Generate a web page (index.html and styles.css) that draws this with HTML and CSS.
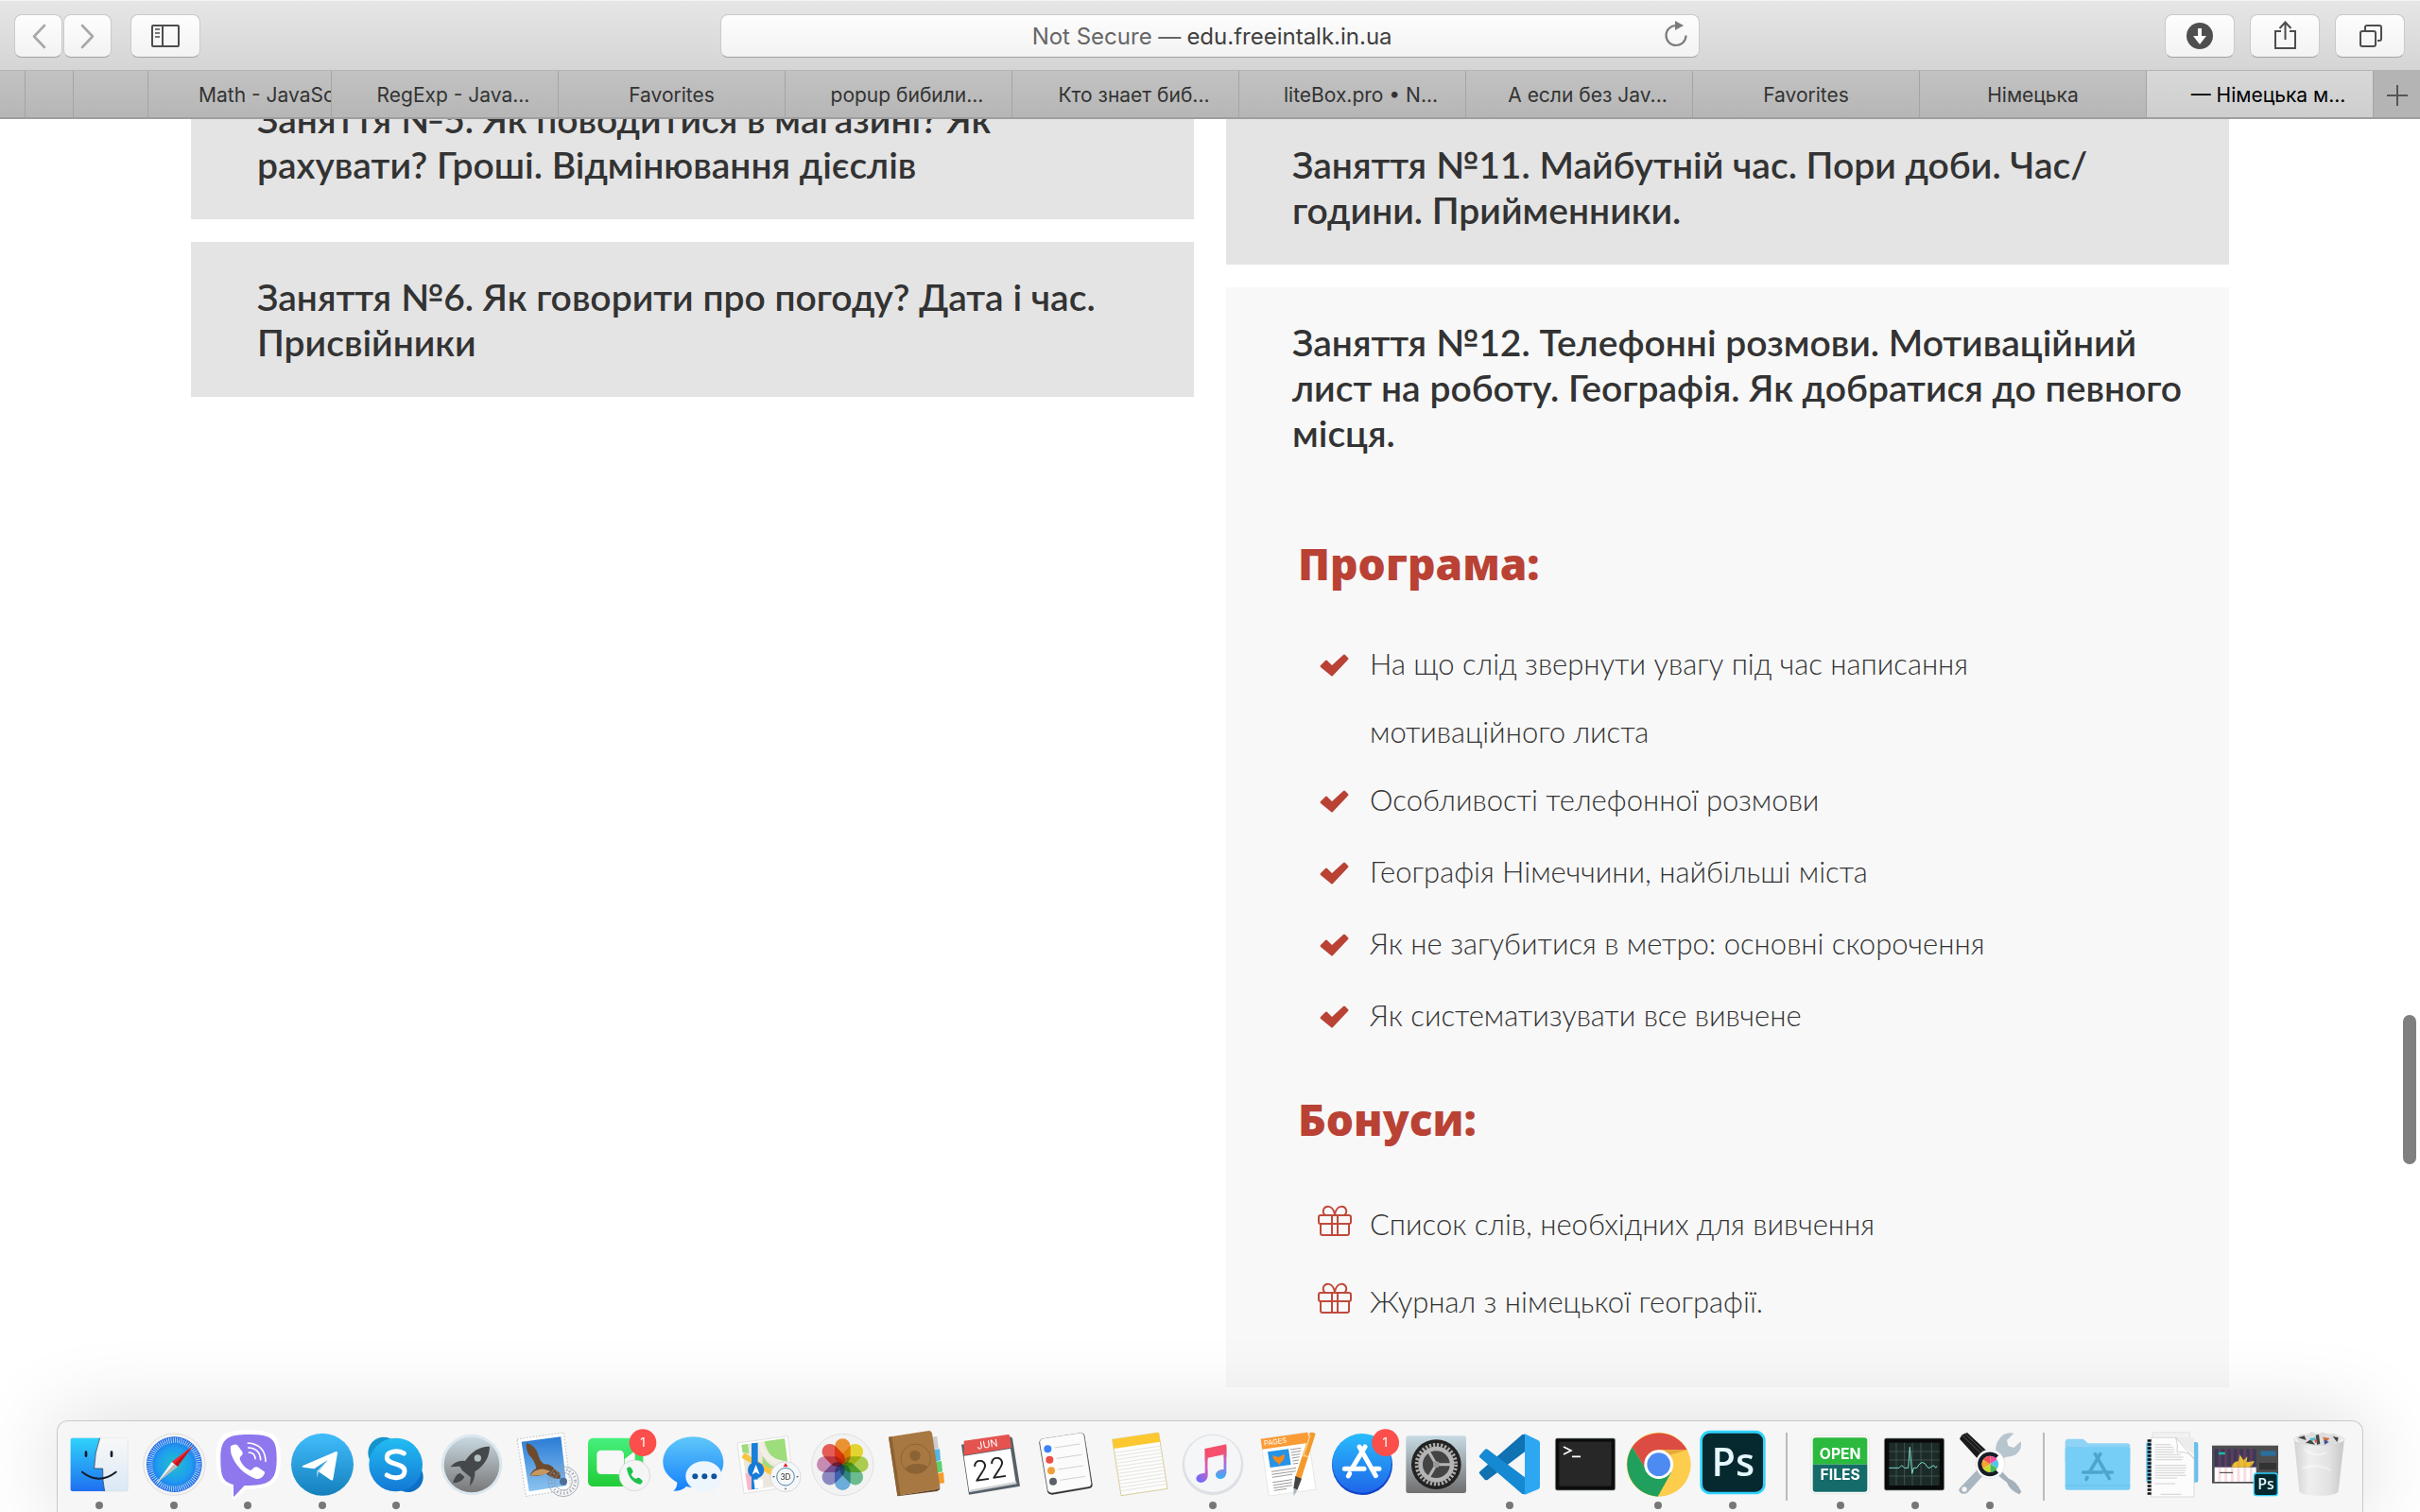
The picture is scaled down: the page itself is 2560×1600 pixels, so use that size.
FILE: index.html
```html
<!DOCTYPE html>
<html lang="uk">
<head>
<meta charset="utf-8">
<title>— Німецька мова</title>
<link rel="stylesheet" href="styles.css">
</head>
<body>
<header class="browser">
  <div class="toolbar">
    <div class="tools tools-left">
      <div class="nav">
        <button class="tool tool-narrow" aria-label="Back"><svg width="50" height="44" viewBox="0 0 50 44"><path d="M31 11 20 22.500 31 34" fill="none" stroke="#a8a8a8" stroke-width="2.600" stroke-linecap="round" stroke-linejoin="round"/></svg></button>
        <button class="tool tool-narrow" aria-label="Forward"><svg width="50" height="44" viewBox="0 0 50 44"><path d="M19 11 30 22.500 19 34" fill="none" stroke="#a8a8a8" stroke-width="2.600" stroke-linecap="round" stroke-linejoin="round"/></svg></button>
      </div>
      <button class="tool" aria-label="Sidebar"><svg width="72" height="44" viewBox="0 0 72 44"><g fill="none" stroke="#4d4d4d" stroke-width="2"><rect x="22" y="11" width="28" height="22" rx="1"/><path d="M33 11v22"/></g><path d="M25 15h5M25 19h5M25 23h5" stroke="#777" stroke-width="2"/></svg></button>
    </div>
    <div class="address">
      <label for="url">Not Secure —</label>
      <input id="url" type="text" value="edu.freeintalk.in.ua">
      <button class="reload" aria-label="Reload"><svg width="28" height="32" viewBox="0 0 28 32"><path d="M14 6a10.500 10.500 0 1 0 10.500 10.500" fill="none" stroke="#7b7b7b" stroke-width="2.200"/><path d="M13 1v10l9-5z" fill="#7b7b7b"/></svg></button>
    </div>
    <div class="tools tools-right">
      <button class="tool" aria-label="Downloads"><svg width="72" height="44" viewBox="0 0 72 44"><circle cx="36" cy="22" r="14" fill="#4f4f4f"/><path d="M34 14h4v8h5l-7 9-7-9h5z" fill="#fff"/></svg></button>
      <button class="tool" aria-label="Share"><svg width="72" height="44" viewBox="0 0 72 44"><path d="M32 17h-6v18h21V17h-6M36.500 26V8M30.500 14l6-6.500 6 6.500" fill="none" stroke="#4d4d4d" stroke-width="2"/></svg></button>
      <button class="tool" aria-label="Show all tabs"><svg width="72" height="44" viewBox="0 0 72 44"><g fill="none" stroke="#4d4d4d" stroke-width="2"><rect x="26" y="17" width="16" height="16" rx="2"/><path d="M31 16v-3q0-2 2-2h13q2 0 2 2v12q0 2-2 2h-2"/></g></svg></button>
    </div>
  </div>
  <nav class="tabs">
    <button class="tab stack-a" aria-label="Tab"></button>
    <button class="tab stack-b" aria-label="Tab"></button>
    <button class="tab stack-c" aria-label="Tab"></button>
    <button class="tab stack-d">Math - JavaScript</button>
    <button class="tab full long">RegExp - Java...</button>
    <button class="tab full">Favorites</button>
    <button class="tab full long">popup бибили...</button>
    <button class="tab full long">Кто знает биб...</button>
    <button class="tab full long">liteBox.pro • N...</button>
    <button class="tab full long">А если без Jav...</button>
    <button class="tab full">Favorites</button>
    <button class="tab full">Німецька</button>
    <button class="tab full long active">— Німецька м...</button>
    <button class="tab add" aria-label="New tab"><svg width="24" height="24" viewBox="0 0 24 24"><path d="M12 1v22M1 12h22" stroke="#555" stroke-width="2"/></svg></button>
  </nav>
</header>

<main class="lessons">
  <section class="column column-left">
    <article class="card"><h2>Заняття №5. Як поводитися в магазині? Як<br>рахувати? Гроші. Відмінювання дієслів</h2></article>
    <article class="card"><h2>Заняття №6. Як говорити про погоду? Дата і час.<br>Присвійники</h2></article>
  </section>
  <section class="column column-right">
    <article class="card"><h2>Заняття №11. Майбутній час. Пори доби. Час/<br>години. Прийменники.</h2></article>
    <article class="card open">
      <h2>Заняття №12. Телефонні розмови. Мотиваційний<br>лист на роботу. Географія. Як добратися до певного<br>місця.</h2>
      <div class="details">
        <h3>Програма:</h3>
        <ul class="program">
          <li><svg class="check" viewBox="0 0 30 24"><path d="M0 12l5-5q1-1 2 0l5 5L24 1q1-1 2 0l3 3q1 1 0 2L13 23q-1 1-2 0L0 14q-1-1 0-2z"/></svg><span>На що слід звернути увагу під час написання<br>мотиваційного листа</span></li>
          <li><svg class="check" viewBox="0 0 30 24"><path d="M0 12l5-5q1-1 2 0l5 5L24 1q1-1 2 0l3 3q1 1 0 2L13 23q-1 1-2 0L0 14q-1-1 0-2z"/></svg><span>Особливості телефонної розмови</span></li>
          <li><svg class="check" viewBox="0 0 30 24"><path d="M0 12l5-5q1-1 2 0l5 5L24 1q1-1 2 0l3 3q1 1 0 2L13 23q-1 1-2 0L0 14q-1-1 0-2z"/></svg><span>Географія Німеччини, найбільші міста</span></li>
          <li><svg class="check" viewBox="0 0 30 24"><path d="M0 12l5-5q1-1 2 0l5 5L24 1q1-1 2 0l3 3q1 1 0 2L13 23q-1 1-2 0L0 14q-1-1 0-2z"/></svg><span>Як не загубитися в метро: основні скорочення</span></li>
          <li><svg class="check" viewBox="0 0 30 24"><path d="M0 12l5-5q1-1 2 0l5 5L24 1q1-1 2 0l3 3q1 1 0 2L13 23q-1 1-2 0L0 14q-1-1 0-2z"/></svg><span>Як систематизувати все вивчене</span></li>
        </ul>
        <h3>Бонуси:</h3>
        <ul class="bonus">
          <li><svg class="gift" viewBox="0 0 36 32"><rect x="1" y="10" width="34" height="9" rx="2"/><path d="M3 19v10q0 2 2 2h26q2 0 2-2V19M15 10v21M21 10v21M18 9C16-1 8-1 6 4q-1 4 2 6M18 9c2-10 10-10 12-5q1 4-2 6"/></svg><span>Список слів, необхідних для вивчення</span></li>
          <li><svg class="gift" viewBox="0 0 36 32"><rect x="1" y="10" width="34" height="9" rx="2"/><path d="M3 19v10q0 2 2 2h26q2 0 2-2V19M15 10v21M21 10v21M18 9C16-1 8-1 6 4q-1 4 2 6M18 9c2-10 10-10 12-5q1 4-2 6"/></svg><span>Журнал з німецької географії.</span></li>
        </ul>
      </div>
    </article>
  </section>
  <div class="scroll-thumb"></div>
</main>

<footer class="dock">
  <button class="app running" aria-label="Finder"><svg viewBox="79 40 234 255"><defs><linearGradient id="fa" x2="0" y2="1"><stop stop-color="#2fd3fb"/><stop offset="1" stop-color="#1f6ff0"/></linearGradient><linearGradient id="fb" x2="0" y2="1"><stop stop-color="#f8f8f8"/><stop offset="1" stop-color="#dbe8f6"/></linearGradient></defs><rect x="105" y="93" width="182" height="169" rx="6" fill="url(#fb)" stroke="#c9d2dc"/><path d="M111 93h87q-17 46-18 97h27q-1 40 6 72H111q-6 0-6-6V99q0-6 6-6z" fill="url(#fa)"/><path d="M198 93q-17 46-18 97h27q-1 40 6 72" fill="none" stroke="#1c2a3c" stroke-width="2"/><path d="M154 138v12M235 138v12" stroke="#111c28" stroke-width="8" stroke-linecap="round"/><path d="M142 201q53 42 107 0" fill="none" stroke="#111c28" stroke-width="6" stroke-linecap="round"/></svg></button>
  <button class="app running" aria-label="Safari"><svg viewBox="317 40 234 255"><defs><radialGradient id="sa"><stop stop-color="#20c0c8"/><stop offset=".6" stop-color="#1f9df0"/><stop offset="1" stop-color="#1f66e6"/></radialGradient></defs><circle cx="435" cy="177" r="98" fill="#f4f4f4" stroke="#d0d0d0" stroke-width="2"/><circle cx="435" cy="177" r="88" fill="url(#sa)"/><circle cx="435" cy="177" r="77" fill="none" stroke="#e8f4ff" stroke-width="17" stroke-dasharray="2 4.720"/><path d="M495 117l-50 67-18-15z" fill="#f0282d"/><path d="M495 117l-50 67-10-8z" fill="#c0161c"/><path d="M379 236l48-67 18 15z" fill="#f4f4f4"/><path d="M379 236l56-60 10 8z" fill="#b8b8b8"/></svg></button>
  <button class="app running" aria-label="Viber"><svg viewBox="549 40 234 255"><path d="M669 68c80 0 102 16 102 90s-20 96-108 98l-39 30q-8 2-8-8v-29c-34-8-50-24-50-91 0-76 26-90 103-90z" fill="#fff"/><path d="M669 82c76 0 89 14 89 76s-14 86-89 86h-13l-32 34q-3 3-3-2v-35c-32-8-41-22-41-83 0-64 22-76 89-76z" fill="#8f77ee"/><path d="M612 119q12-9 21-4l16 22q4 8-5 14-6 7 0 16 9 20 30 29 5 0 11-8 8-6 15-1l19 13q4 6-6 16-10 10-22 6-57-22-77-77-4-16-2-26z" fill="#fff"/><path d="M670 139q19 1 20 20M668 124q37 2 39 38M667 109q54 4 56 58" fill="none" stroke="#fff" stroke-width="5" stroke-linecap="round"/></svg></button>
  <button class="app running" aria-label="Telegram"><svg viewBox="786 40 234 255"><defs><linearGradient id="tg" x2="0" y2="1"><stop stop-color="#41bdfc"/><stop offset="1" stop-color="#1580bd"/></linearGradient></defs><circle cx="903" cy="177" r="99" fill="url(#tg)"/><path d="M841 181l105-45q6-1 5 5l-14 83q-2 6-8 2l-38-26 29-37-43 28-35-5q-6-2-1-5z" fill="#fff"/><path d="M891 200l29-37-34 35v22z" fill="#c5e1f2"/></svg></button>
  <button class="app running" aria-label="Skype"><svg viewBox="1021 40 234 255"><defs><linearGradient id="sk" x2="0" y2="1"><stop stop-color="#22bdf2"/><stop offset="1" stop-color="#1378d4"/></linearGradient></defs><circle cx="1099" cy="140" r="50" fill="#1593cd"/><circle cx="1176" cy="217" r="48" fill="#0d70c6"/><circle cx="1137" cy="178" r="85" fill="url(#sk)"/><path d="M1163 142c-20-11-55-8-54 13 1 26 56 15 56 43 0 26-38 25-56 13" fill="none" stroke="#fff" stroke-width="15" stroke-linecap="round"/></svg></button>
  <button class="app" aria-label="Launchpad"><svg viewBox="1257 40 234 255"><defs><linearGradient id="lp" x2="0" y2="1"><stop stop-color="#c9d8e0"/><stop offset="1" stop-color="#777"/></linearGradient></defs><circle cx="1377" cy="178" r="97" fill="#dbe7ee"/><circle cx="1377" cy="178" r="88" fill="url(#lp)"/><path d="M1434 120c-30-1-56 14-78 46q-28-4-47 19l30-2 8 13 17 14 10 8-3 28q18-20 16-46c36-24 46-50 47-80z" fill="#45484b"/><path d="M1340 204l14 12q-6 18-36 20 4-26 22-32z" fill="#45484b"/><circle cx="1396" cy="157" r="11" fill="#b4bfc4"/></svg></button>
  <button class="app" aria-label="Mail"><svg viewBox="-8 40 234 255"><defs><linearGradient id="ml" x2="0" y2="1"><stop stop-color="#2a7bd6"/><stop offset="1" stop-color="#8cc4f0"/></linearGradient></defs><path d="M22 97l148-21 22 180-142 22z" fill="#fff" stroke="#ccc" stroke-width="4" stroke-dasharray="5 5"/><path d="M36 105l125-16 18 155-119 19z" fill="url(#ml)"/><path d="M52 108q26 8 35 32 6 26 20 36 22-1 34 16 22 8 18 30-30 2-46-18-20 14-50 8 8-18 20-22-4-24-24-44-10-20-7-38z" fill="#6d4a2c"/><path d="M64 212q14-22 44-20l20 6q-24 18-64 14z" fill="#c59862"/><g fill="none" stroke="#8d97a5" stroke-width="3" opacity=".75"><circle cx="169" cy="231" r="48"/><circle cx="169" cy="231" r="28"/><circle cx="169" cy="231" r="38" stroke-width="9" stroke-dasharray="4 7"/></g><circle cx="169" cy="231" r="12" fill="#4c6f99"/></svg></button>
  <button class="app" aria-label="FaceTime, 1 notification"><svg viewBox="228 40 234 255"><defs><linearGradient id="ft" x2="0" y2="1"><stop stop-color="#45f07d"/><stop offset="1" stop-color="#22cb36"/></linearGradient></defs><rect x="246" y="93" width="175" height="154" rx="16" fill="url(#ft)"/><rect x="274" y="132" width="86" height="76" rx="14" fill="#f7f7f7"/><path d="M362 160l28-22q5-2 5 4v46h-33z" fill="#f7f7f7"/><circle cx="394" cy="212" r="49" fill="#f4f5f4" stroke="#ccc" stroke-width="2"/><path d="M369 189q9-9 15 0l5 9q0 5-6 10 3 10 15 15 7-6 12-3l9 9q1 7-8 11-35-8-42-51z" fill="#1fc14b"/><circle cx="420" cy="108" r="43" fill="#fc4e4b"/><text class="badge" x="420" y="122">1</text></svg></button>
  <button class="app" aria-label="Messages"><svg viewBox="464 40 234 255"><defs><linearGradient id="ms" x2="0" y2="1"><stop stop-color="#60c8fa"/><stop offset="1" stop-color="#1480fb"/></linearGradient></defs><path d="M579 89c54 0 96 36 96 81s-40 80-96 80q-10 0-22-3-14 15-41 14 12-10 12-27c-28-16-45-37-45-64 0-45 42-81 96-81z" fill="url(#ms)"/><path d="M613 167c33 0 57 21 57 48 0 16-8 28-22 36l2 18q-13-2-19-10-8 2-18 2c-33 0-58-20-58-46s25-48 58-48z" fill="#eef6fd"/><g fill="#12539c"><circle cx="585" cy="215" r="9"/><circle cx="615" cy="215" r="9"/><circle cx="645" cy="215" r="9"/></g></svg></button>
  <button class="app" aria-label="Maps"><svg viewBox="699 40 234 255"><path d="M720 109l160-22 19 160-158 22z" fill="#fff" stroke="#d5d5d5" stroke-width="2"/><path d="M733 115l137-20 17 145-134 19z" fill="#ece7dc"/><path d="M806 104l64-9 10 78q-58-2-74-69z" fill="#9ddd7c"/><path d="M733 115l20-3 4 30-20-3zM800 150q24 40 60 40l-60-1z" fill="#9ddd7c"/><path d="M790 106q18 66 90 70" fill="none" stroke="#f2eee4" stroke-width="18"/><path d="M745 205l24 3 4 48-20 3z" fill="#f8b8c8"/><path d="M738 148l100 60" stroke="#f9c440" stroke-width="18"/><path d="M765 110v146h20V108z" fill="#187fdb"/><path d="M772 225l28-1 2 26-26 6z" fill="#fff"/><circle cx="779" cy="195" r="26" fill="#167bd8"/><path d="M779 178l12 31-12-7-12 7z" fill="#fff"/><circle cx="873" cy="216" r="48" fill="#f5f7f9" stroke="#c8ccd0" stroke-width="2"/><circle cx="873" cy="216" r="28" fill="none" stroke="#4f86a6" stroke-width="3"/><path d="M873 172l7 12h-14z" fill="#e51c23"/><path d="M833 216h5M908 216h5M873 252v5" stroke="#444" stroke-width="4"/><text class="map-label" x="873" y="225">3D</text></svg></button>
  <button class="app" aria-label="Photos"><svg viewBox="935 40 234 255"><circle cx="1053" cy="178" r="98" fill="#f2f2f2" stroke="#d2d5d8" stroke-width="2"/><g class="petals"><rect x="1028" y="95" width="50" height="82" rx="25" fill="#f89a35"/><rect x="1028" y="95" width="50" height="82" rx="25" fill="#f0e031" transform="rotate(45 1053 177)"/><rect x="1028" y="95" width="50" height="82" rx="25" fill="#b4d655" transform="rotate(90 1053 177)"/><rect x="1028" y="95" width="50" height="82" rx="25" fill="#72c596" transform="rotate(135 1053 177)"/><rect x="1028" y="95" width="50" height="82" rx="25" fill="#72b5e5" transform="rotate(180 1053 177)"/><rect x="1028" y="95" width="50" height="82" rx="25" fill="#9490cc" transform="rotate(225 1053 177)"/><rect x="1028" y="95" width="50" height="82" rx="25" fill="#d192bd" transform="rotate(270 1053 177)"/><rect x="1028" y="95" width="50" height="82" rx="25" fill="#f0625a" transform="rotate(315 1053 177)"/></g></svg></button>
  <button class="app" aria-label="Contacts"><svg viewBox="1170 40 234 255"><path d="M1336 90l18-2 4 38-18 4z" fill="#ccc"/><path d="M1344 130l18-2 3 36-18 4z" fill="#53b9e2"/><path d="M1350 168l18-2 3 34-18 4z" fill="#5fd06c"/><path d="M1356 206l18-4 3 34-18 2z" fill="#f59b2b"/><path d="M1200 90l128-20q8 0 10 8l25 168q-2 8-10 10l-125 20z" fill="#a87843"/><path d="M1200 90l10-1 28 186-10 2z" fill="#8d6232"/><path d="M1228 276l125-20q8-2 10-8v5q-2 8-10 9l-124 16z" fill="#5e4223"/><circle cx="1286" cy="159" r="47" fill="none" stroke="#8c6334" stroke-width="3"/><circle cx="1284" cy="149" r="17" fill="#8c6334"/><path d="M1252 192q10-16 36-17 26 0 36 10-14 20-38 21-20 0-34-14z" fill="#8c6334"/></svg></button>
  <button class="app" aria-label="Calendar"><svg viewBox="-94 40 234 255"><path d="M-70 114l152-24q8-2 10 4l24 152-162 27z" fill="#566069"/><path d="M-62 150l148-23 17 108-148 29z" fill="#fff"/><path d="M-62 102l140-20q4 0 5 4l6 38-151 24z" fill="#e5534f"/><path d="M-44 258l148-27 2 8-148 26z" fill="#cfd2d4"/><text class="cal-month" x="14" y="124" transform="rotate(-9 14 124)">JUN</text><text class="cal-day" x="24" y="224" transform="rotate(-9 24 224)">22</text></svg></button>
  <button class="app" aria-label="Reminders"><svg viewBox="142 40 234 255"><path d="M192 95l119-18q10 0 12 8l25 156q0 10-10 12l-118 20q-12 0-15-10l-26-154q0-12 13-14z" fill="#333"/><path d="M192 95l119-18q8 0 10 8l23 152q0 9-10 11l-115 19q-11 0-13-10l-25-150q0-10 11-12z" fill="#fbfbfb" stroke="#bbb"/><circle cx="206" cy="128" r="12" fill="#3a82f7"/><circle cx="212" cy="162" r="12" fill="#ea4e43"/><circle cx="217" cy="197" r="12" fill="#f29f3a"/><circle cx="223" cy="231" r="12" fill="#5b6068"/><path d="M228 124l80-12M234 158l80-12M239 193l80-12M245 227l80-12" stroke="#bbb" stroke-width="2"/></svg></button>
  <button class="app" aria-label="Notes"><svg viewBox="377 40 234 255"><path d="M409 98l147-22 28 178-147 22z" fill="#fdfdfb" stroke="#c9b56a" stroke-width="2"/><path d="M409 98l147-22 5 29-147 22z" fill="#fbc92f"/><path d="M417 140l147-22M419 151l147-22M421 162l147-22M423 173l147-22M424 184l147-22M426 195l147-22M428 206l147-22M430 217l147-22M431 228l147-22M433 239l147-22M434 250l147-22M436 261l147-22" stroke="#d8d8d8" stroke-width="2"/></svg></button>
  <button class="app running" aria-label="iTunes"><svg viewBox="613 40 234 255"><defs><linearGradient id="it" x1=".7" x2=".3" y2="1"><stop stop-color="#fa4a5c"/><stop offset=".45" stop-color="#cf60c4"/><stop offset="1" stop-color="#6a6cf8"/></linearGradient><linearGradient id="iu" x2="0" y2="1"><stop stop-color="#fa4a5c"/><stop offset=".5" stop-color="#b06ad8"/><stop offset="1" stop-color="#32b4f4"/></linearGradient></defs><circle cx="730" cy="178" r="97" fill="#dde1e5"/><circle cx="730" cy="174" r="90" fill="#f5f6f8"/><path d="M705 127l68-14v40l-68 12z" fill="#f6506e"/><path d="M705 127h9v88q-4 20-24 20-16-4-12-18 6-12 27-13z" fill="url(#it)"/><path d="M764 120h9v84q-4 20-22 19-16-4-11-18 6-12 24-13z" fill="url(#iu)"/><path d="M714 156l50-10v46h-50z" fill="#f5f6f8"/></svg></button>
  <button class="app" aria-label="Pages"><svg viewBox="848 40 234 255"><path d="M880 96l149-21 26 181-149 21z" fill="#fff" stroke="#ddd" stroke-width="2"/><path d="M880 96l149-21 5 33-149 21z" fill="#fb9b35"/><text class="pages-label" x="927" y="113" transform="rotate(-8 927 113)">PAGES</text><path d="M902 137l66-9 8 50-66 9z" fill="#2593e6"/><path d="M918 148l18 6 20-10q0 20-12 26l-4 9-7-8q-14-6-15-23z" fill="#f38a1d"/><path d="M974 130l34-5M976 139l32-5M977 148l28-4M979 157l24-4M981 166l20-3M983 175l16-2M914 200l78-12M915 209l76-11M917 218l64-10M918 234l62-9M920 243l60-9M921 252l60-9M922 260l40-6" stroke="#999" stroke-width="3"/><path d="M1036 76q14-2 18 4l-46 144-18-8z" fill="#f29a2c"/><path d="M990 214l20 8-14 36-12-6z" fill="#444"/><path d="M984 252l12 6-11 20z" fill="#aab4bb"/><path d="M1015 148l16 5M1037 84l-22 68" stroke="#fbd38a" stroke-width="4"/></svg></button>
  <button class="app" aria-label="App Store, 1 notification"><svg viewBox="1084 40 234 255"><defs><linearGradient id="as" x2="0" y2="1"><stop stop-color="#28bcfb"/><stop offset="1" stop-color="#1f66ea"/></linearGradient></defs><circle cx="1204" cy="178" r="96" fill="#1145c8"/><circle cx="1203" cy="173" r="94" fill="url(#as)"/><path d="M1213 121l-42 70M1164 206l-4 8M1195 121l52 92M1148 191h62M1242 191h16" fill="none" stroke="#fff" stroke-width="15" stroke-linecap="round"/><circle cx="1278" cy="108" r="43" fill="#fc4e4b"/><text class="badge" x="1277" y="122">1</text></svg></button>
  <button class="app" aria-label="System Preferences"><svg viewBox="1319 40 234 255"><defs><linearGradient id="sp" x2="0" y2="1"><stop stop-color="#c7dbe4"/><stop offset="1" stop-color="#6f6f6f"/></linearGradient></defs><rect x="1341" y="86" width="191" height="182" rx="7" fill="url(#sp)"/><circle cx="1437" cy="177" r="79" fill="#222"/><circle cx="1437" cy="177" r="62" fill="none" stroke="#aaa" stroke-width="12" stroke-dasharray="7 5.170"/><circle cx="1437" cy="177" r="50" fill="#444" stroke="#b4b4b4" stroke-width="14"/><path d="M1437 177h56M1437 177l-28-48M1437 177l-28 48" stroke="#b4b4b4" stroke-width="9"/><circle cx="1437" cy="177" r="10" fill="#999"/></svg></button>
  <button class="app running" aria-label="Visual Studio Code"><svg viewBox="55 40 234 255"><path d="M77 207l16 18q5 4 10 0l117-88V81l-8 1-135 118q-4 4 0 7z" fill="#1071b3"/><path d="M77 148l16-18q5-4 10 0l117 88v54l-8-1L77 155q-4-4 0-7z" fill="#1689d3"/><path d="M220 80l42 20q6 3 6 8v140q0 6-6 8l-42 17z" fill="#2ea7f2"/></svg></button>
  <button class="app" aria-label="Terminal"><svg viewBox="291 40 234 255"><rect x="316" y="94" width="190" height="165" rx="6" fill="#0c0c0c" stroke="#8f9aa0" stroke-width="2"/><rect x="328" y="105" width="166" height="141" fill="#272727"/><path d="M342 121l24 12-24 12M369 152h27" fill="none" stroke="#fff" stroke-width="5"/></svg></button>
  <button class="app running" aria-label="Chrome"><svg viewBox="526 40 234 255"><circle cx="645" cy="177" r="102" fill="#fecd4d"/><path d="M561 122a102 102 0 0 1 174 9h-90l-38 66z" fill="#dd4c42"/><path d="M561 122a102 102 0 0 0 81 157l43-77-78-5z" fill="#21a05d"/><path d="M645 131h90l-60 18z" fill="#e7a93a"/><circle cx="645" cy="177" r="46" fill="#fff"/><circle cx="645" cy="177" r="37" fill="#4d8bf3"/></svg></button>
  <button class="app running" aria-label="Photoshop"><svg viewBox="762 40 234 255"><rect x="775" y="69" width="208" height="203" rx="32" fill="#30d2fb"/><rect x="783" y="78" width="192" height="186" rx="24" fill="#062930"/><text class="ps" x="880" y="213">Ps</text></svg></button>
  <span class="divider"></span>
  <button class="app running" aria-label="Open Files"><svg viewBox="1105 40 234 255"><rect x="1128" y="85" width="186" height="185" rx="16" fill="#fff" stroke="#ddd" stroke-width="2"/><path d="M1134 177v-76q0-9 9-9h155q9 0 9 9v76z" fill="#2bb93e"/><path d="M1134 177h173v78q0 9-9 9h-155q-9 0-9-9z" fill="#156b69"/><text class="open-label" x="1221" y="161">OPEN</text><text class="open-label" x="1221" y="226">FILES</text></svg></button>
  <button class="app running" aria-label="Activity Monitor"><svg viewBox="1341 40 234 255"><rect x="1360" y="94" width="190" height="165" rx="6" fill="#0a0a0a" stroke="#8f9aa0" stroke-width="2"/><rect x="1375" y="108" width="160" height="136" fill="#1c2a28"/><path d="M1398 108v136M1424 108v136M1449 108v136M1476 108v136M1510 108v136M1375 136h160M1375 163h160M1375 214h160" stroke="#4c6662" stroke-width="2"/><path d="M1375 188h32l8-8 9 8h12l5-66 7 84 5-18h10q18-34 34-2 6 6 12-2l8-4 6 8 4-6" fill="none" stroke="#7fe0cf" stroke-width="3"/></svg></button>
  <button class="app running" aria-label="ColorSync Utility"><svg viewBox="77 40 234 255"><path d="M98 252l106-110 18 16-98 108q-10 8-22 2-10-8-4-16z" fill="#aab6bf"/><path d="M212 140q-2-40 26-58 16-8 32-4l-22 22 4 18 18 6 22-20q6 26-16 42-14 8-34 8l-20 22-22-20z" fill="#b7c5cf"/><circle cx="113" cy="256" r="8" fill="#f6f6f6"/><path d="M98 96q6-16 24-20l62 58-28 26z" fill="#1a1a1a"/><path d="M106 84l66 64M116 80l64 62" stroke="#555" stroke-width="3"/><path d="M212 206l14-14 28 30q24 6 40 42l-6 8q-32-14-40-38z" fill="#a5b1ba"/><circle cx="195" cy="176" r="46" fill="#fff" stroke="#ddd" stroke-width="2"/><circle cx="194" cy="176" r="32" fill="none" stroke="#181e27" stroke-width="13" stroke-dasharray="150 51" transform="rotate(45 194 176)"/><path d="M195 176v-26a26 26 0 0 1 22 12z" fill="#ef4f9b"/><path d="M195 176l22-14a26 26 0 0 1 0 28z" fill="#52c4e8"/><path d="M195 176l22 14a26 26 0 0 1-22 12z" fill="#4cb950"/><path d="M195 176v26a26 26 0 0 1-22-12z" fill="#c5dd35"/><path d="M195 176l-22 14a26 26 0 0 1 0-28z" fill="#fba52c"/><path d="M195 176l-22-14a26 26 0 0 1 22-12z" fill="#ef4e55"/></svg></button>
  <span class="divider"></span>
  <button class="app" aria-label="Applications"><svg viewBox="420 40 234 255"><path d="M434 108q0-12 10-12h44q6 0 10 6l8 8h124q10 0 10 10v50H434z" fill="#8ed3f5"/><path d="M434 132q0-10 10-10h186q10 0 10 10v120q0 6-6 6H440q-6 0-6-6z" fill="#76cdf5"/><path d="M434 244h206" stroke="#62b7df" stroke-width="2"/><path d="M545 144l-34 58M504 218l-3 6M529 144l45 78M491 202h60M566 202h17" fill="none" stroke="#4da5cf" stroke-width="11" stroke-linecap="round"/></svg></button>
  <button class="app" aria-label="Documents"><svg viewBox="656 40 234 255"><rect x="690" y="106" width="165" height="128" rx="6" fill="#68c1ea"/><path d="M710 76l118-1v30H710z" fill="#f2f2f2" stroke="#bbb"/><path d="M706 92h84l52 46v142H706z" fill="#fcfcfc" stroke="#ccc" stroke-width="2"/><path d="M784 92h58v58z" fill="#ececec"/><path d="M784 92q8 20 4 46 40-4 54 22z" fill="#fff" stroke="#bbb" stroke-width="2"/><path d="M700 98v176" stroke="#111" stroke-width="12" stroke-dasharray="7 5"/><path d="M718 114h50M718 122h58M718 130h62M718 138h60M718 146h80M718 154h90M718 162h86M718 180h98M718 188h100M718 196h96M718 204h94M718 212h98M718 220h70M718 238h64M736 272h66" stroke="#bbb" stroke-width="2"/></svg></button>
  <button class="app" aria-label="Minimised Photoshop window"><svg viewBox="891 40 234 255"><rect x="900" y="117" width="210" height="120" fill="#4e4e50"/><rect x="908" y="128" width="132" height="104" fill="#3d3858"/><rect x="908" y="186" width="132" height="46" fill="#fff"/><path d="M962 186q4-18 22-20l4-20 12 18 12-12-2 18 24-4q-4 16-18 20z" fill="#e6c22e"/><path d="M924 128v104M944 128v104M964 128v104M984 128v104M1004 128v104M1024 128v104" stroke="#e05a6a" stroke-width="9" opacity=".2"/><rect x="920" y="138" width="22" height="8" rx="3" fill="#1fb8a0"/><path d="M924 203h42" stroke="#333" stroke-width="3"/><rect x="1054" y="134" width="48" height="16" fill="#2b6f9e"/><rect x="1050" y="172" width="54" height="22" fill="#333"/><rect x="1031" y="203" width="79" height="75" rx="11" fill="#30d2fb"/><rect x="1035" y="207" width="71" height="67" rx="8" fill="#062930"/><text class="ps-small" x="1071" y="255">Ps</text></svg></button>
  <button class="app" aria-label="Trash"><svg viewBox="1127 40 234 255"><defs><linearGradient id="tr"><stop stop-color="#d2d2d2"/><stop offset=".3" stop-color="#efefef"/><stop offset=".7" stop-color="#e2e2e2"/><stop offset="1" stop-color="#c6c6c6"/></linearGradient></defs><path d="M1159 94h160l-19 168q-4 14-62 14t-62-14z" fill="url(#tr)"/><ellipse cx="1239" cy="98" rx="80" ry="18" fill="#f4f4f4" stroke="#ccc" stroke-width="2"/><path d="M1166 96l16-16 20 6 12-14 20 10 18-8 16 10 18-6 24 18-10 12-40 8-50-2-30-4z" fill="#ddd"/><path d="M1172 92l20-6 6 14zM1228 84l10-2 4 30-10 2zM1282 88l18 4-4 14zM1196 108l16-10 14 16z" fill="#444"/><path d="M1208 94l22-2-10 12z" fill="#39bfe0"/><path d="M1224 96l10 4-8 10z" fill="#d9542c"/><path d="M1250 90l22 4-12 14z" fill="#d66a3a"/><path d="M1254 98l16 8-14 8z" fill="#35549a"/><path d="M1190 128q40 30 72 10M1186 190q40-20 90 6" fill="none" stroke="#fff" stroke-width="7" opacity=".4"/></svg></button>
</footer>
</body>
</html>
```
FILE: styles.css
```css
* { box-sizing: border-box; }

body {
  margin: 0;
  min-height: 100vh;
  display: flex;
  flex-direction: column;
  overflow: hidden;
  background: #fff;
  font-family: Inter, "Liberation Sans", sans-serif;
}

button {
  border: 0;
  padding: 0;
  background: none;
  font: inherit;
  color: inherit;
}

svg { display: block; overflow: visible; }

/* Browser chrome */
.browser { position: relative; z-index: 2; }

.toolbar {
  height: 75px;
  padding: 0 16px 0 15px;
  display: grid;
  grid-template-columns: 1fr minmax(0, 1036px) 1fr;
  align-items: center;
  border-top: 1px solid #f4f4f4;
  border-bottom: 1px solid #b4b4b4;
  background: linear-gradient(#e6e6e6, #d5d5d5);
}

.tools { display: flex; }
.tools-left { gap: 20px; }
.tools-right { gap: 16px; justify-content: flex-end; }
.nav { display: flex; gap: 1px; }

.tool,
.address {
  height: 46px;
  border: 1px solid #cacaca;
  border-bottom-color: #a4a4a4;
  border-radius: 8px;
  background: linear-gradient(#fdfdfd, #f3f3f3);
}
.tool { width: 74px; display: flex; align-items: center; justify-content: center; }
.tool-narrow { width: 51px; }

.address {
  display: flex;
  align-items: center;
  justify-content: center;
  gap: 6px;
  position: relative;
  padding: 2px 0 0 8px;
  font-size: 24px;
}
.address label { color: #666; }
.address input {
  width: 220px;
  border: 0;
  padding: 0;
  background: none;
  font: inherit;
  color: #404040;
}
.reload { position: absolute; right: 10px; top: 5px; }

.tabs {
  display: flex;
  height: 51px;
  border-bottom: 2px solid #9e9e9e;
  background: linear-gradient(#c2c2c2, #b6b6b6);
  font-size: 21px;
  color: #333;
}
.tab {
  flex: none;
  overflow: hidden;
  padding-top: 2px;
  white-space: nowrap;
  border-right: 1px solid #a4a4a4;
}
.full { flex: 1 1 240px; }
.long { padding-left: 18px; }
.stack-a { width: 27px; }
.stack-b { width: 51px; }
.stack-c { width: 79px; }
.stack-d { width: 194px; padding-left: 53px; text-align: left; }
.active { background: linear-gradient(#d8d8d8, #cecece); color: #000; }
.add { width: 49px; border: 0; display: grid; place-items: center; background: #b4b4b4; }

/* Lesson cards */
.lessons {
  flex: 1;
  position: relative;
  overflow: hidden;
  display: grid;
  grid-template-columns: 1fr 1fr;
  align-items: start;
  gap: 34px;
  padding: 0 202px;
  font-family: Lato, "Open Sans", sans-serif;
}
.column { display: flex; flex-direction: column; gap: 24px; }
.column-left { margin-top: -58px; }
.column-right { margin-top: -10px; }

.card { padding: 34px 0 34px 70px; background: #e4e4e4; color: #333; }
.card.open { padding-bottom: 50px; background: #f8f8f8; }
.card h2 {
  margin: 0;
  font-size: 39px;
  line-height: 48px;
  font-weight: 600;
  white-space: nowrap;
}

.details { padding-top: 84px; padding-left: 6px; }
.details h3 {
  margin: 0;
  font-family: "Open Sans", Lato, sans-serif;
  font-size: 46px;
  line-height: 60px;
  font-weight: 800;
  color: #b94235;
}
.details ul {
  margin: 40px 0;
  padding: 0;
  list-style: none;
  font-size: 31px;
  line-height: 72px;
  font-weight: 300;
  color: #333;
}
.details .bonus { margin-bottom: 0; line-height: 82px; }
.details li { display: grid; grid-template-columns: 36px 1fr; column-gap: 19px; padding-left: 21px; }
.program li { min-height: 76px; }
.check { width: 30px; height: 24px; margin: 26px auto 0; fill: #b94235; }
.gift { width: 36px; height: 32px; margin-top: 22px; fill: none; stroke: #c04a3c; stroke-width: 2; }

.scroll-thumb {
  position: absolute;
  right: 4px;
  top: 948px;
  width: 14px;
  height: 158px;
  border-radius: 7px;
  background: #7f7f7f;
}

/* Dock */
.dock {
  position: fixed;
  z-index: 3;
  left: 60px;
  right: 60px;
  bottom: 0;
  height: 97px;
  padding: 0 5px;
  display: flex;
  border: 1px solid #c9c9c9;
  border-bottom: 0;
  border-radius: 12px 12px 0 0;
  background: #f6f6f6;
  box-shadow: 0 0 90px rgba(0, 0, 0, .15);
}
.app { flex: 1; display: flex; flex-direction: column; align-items: center; }
.app svg { width: 78px; height: 85px; }
.running::after {
  content: "";
  width: 8px;
  height: 8px;
  border-radius: 50%;
  background: #777;
}
.divider { width: 2px; margin: 12px 17px 0; height: 72px; background: #bbb; }

.badge, .map-label, .cal-month, .cal-day, .pages-label, .ps, .ps-small, .open-label { text-anchor: middle; }
.badge { font-size: 40px; fill: #fff; }
.map-label { font-size: 25px; fill: #333; }
.cal-month { font-size: 32px; fill: #fff; }
.cal-day { font-size: 90px; font-weight: 300; fill: #222; }
.pages-label { font-size: 23px; fill: #fff; }
.ps { font: 600 124px "Open Sans", sans-serif; fill: #e4f7fd; }
.ps-small { font: 600 48px "Open Sans", sans-serif; fill: #e4f7fd; }
.open-label { font-size: 47px; font-weight: 700; fill: #fff; }
.petals rect { mix-blend-mode: multiply; }
```
